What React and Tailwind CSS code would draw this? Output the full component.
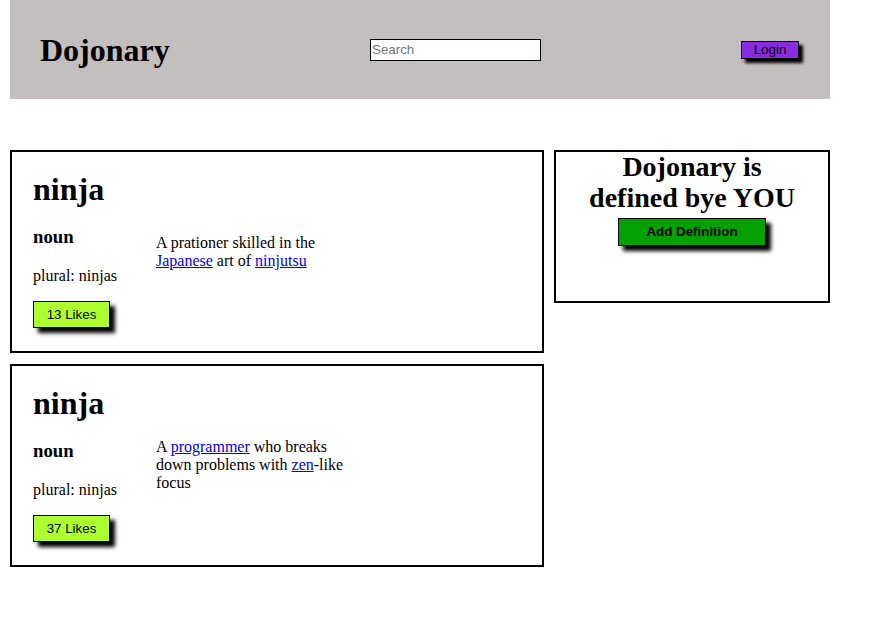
import React from 'react'

const serif = { fontFamily: '"Liberation Serif", "Times New Roman", serif' }

function Link({ children }) {
  return <a href="#" className="text-[#0000ee] underline">{children}</a>
}

function WordCard({ likes, defClass, children }) {
  return (
    <div className="h-[203px] border-2 border-black pl-[21px] pt-[19px]">
      <h1 className="text-[32px] leading-[37px] font-bold">ninja</h1>
      <div className="flex items-start mt-[18px]">
        <div className="w-[123px] shrink-0">
          <h3 className="text-[18.72px] leading-[21px] font-bold">noun</h3>
          <p className="text-[16px] leading-[18px] mt-[20px]">plural: ninjas</p>
          <button className="mt-[16px] h-[27px] w-[77px] bg-[#adff2f] border border-black text-[13.33px] shadow-[5px_5px_4px_black] font-['Liberation_Sans',Arial,sans-serif]">
            {likes} Likes
          </button>
        </div>
        <p className={`w-[196px] text-[16px] leading-[18px] ${defClass}`}>{children}</p>
      </div>
    </div>
  )
}

export default function App() {
  return (
    <div className="w-[874px] h-[622px] bg-white text-black" style={serif}>
      <header className="ml-[10px] w-[820px] h-[99px] bg-[#c3bfbe] flex items-center pl-[30px]">
        <div className="w-[330px] text-[32px] leading-none font-bold">Dojonary</div>
        <input
          type="text"
          placeholder="Search"
          className="w-[171px] h-[22px] border border-black bg-white px-[1px] text-[13.33px] placeholder:text-[#757575] outline-none font-['Liberation_Sans',Arial,sans-serif]"
        />
        <button className="ml-[200px] h-[18px] w-[58px] bg-[#8a2be2] border border-black text-[13.33px] leading-none shadow-[4px_4px_3px_black] font-['Liberation_Sans',Arial,sans-serif]">
          Login
        </button>
      </header>

      <main className="ml-[10px] mt-[51px] flex gap-[10px] items-start">
        <div className="w-[534px] flex flex-col gap-[11px]">
          <WordCard likes={13} defClass="mt-[8px]">
            A prationer skilled in the <Link>Japanese</Link> art of <Link>ninjutsu</Link>
          </WordCard>
          <WordCard likes={37} defClass="-mt-[2px]">
            A <Link>programmer</Link> who breaks down problems with <Link>zen</Link>-like focus
          </WordCard>
        </div>

        <div className="w-[276px] h-[153px] border-2 border-black flex flex-col items-center">
          <h2 className="w-[216px] -mt-[1px] text-center text-[28px] leading-[31px] font-bold">Dojonary is defined bye YOU</h2>
          <button className="mt-[5px] h-[28px] w-[148px] bg-[#04a004] border border-black text-[13.33px] font-bold shadow-[5px_5px_4px_black] font-['Liberation_Sans',Arial,sans-serif]">
            Add Definition
          </button>
        </div>
      </main>
    </div>
  )
}
